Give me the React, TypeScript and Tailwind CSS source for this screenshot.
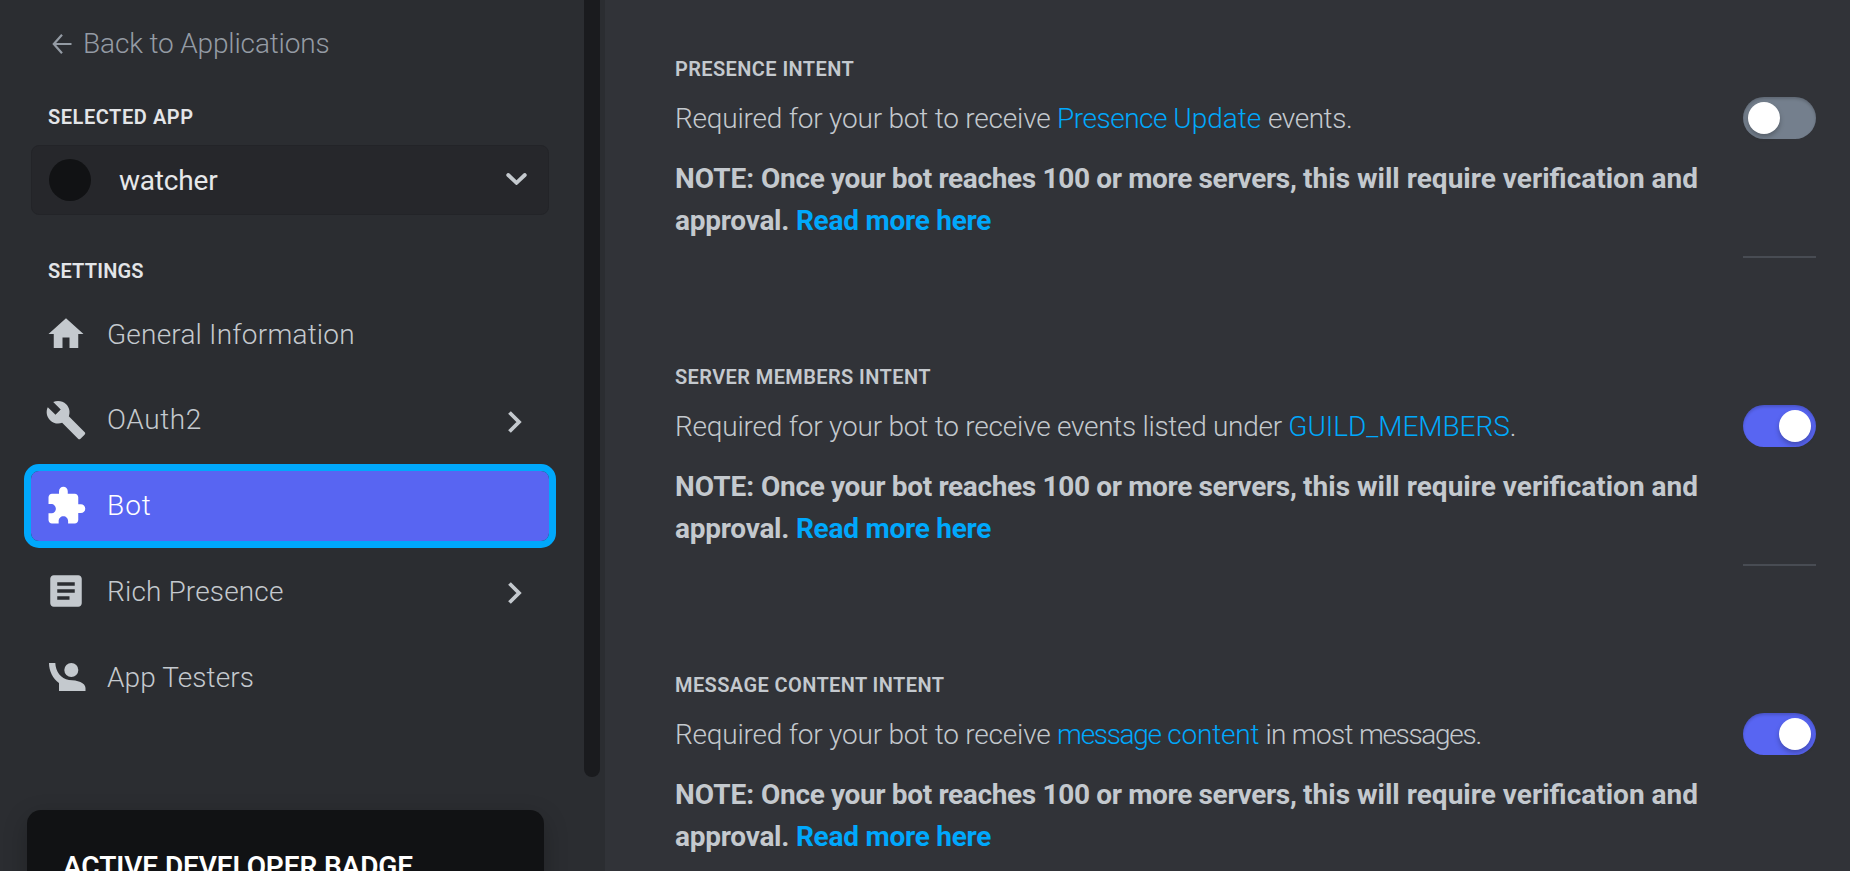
import type { ReactNode } from "react";
import { MdArticle, MdBuild, MdExtension, MdHome } from "react-icons/md";

function Toggle({ on }: { on?: boolean }) {
  return (
    <div className={"flex h-[42px] w-[73px] shrink-0 items-center rounded-full px-[5px] shadow-[inset_0_2px_3px_rgba(0,0,0,0.18)] " + (on ? "justify-end bg-[#5865f2]" : "justify-start bg-[#747f8d]")}>
      <div className="size-8 rounded-full bg-white shadow-[0_3px_5px_rgba(0,0,0,0.25)]" />
    </div>
  );
}

function Link({ children }: { children: ReactNode }) {
  return <a className="text-[#00a8fc]">{children}</a>;
}

function Intent({ title, on, children }: { title: string; on?: boolean; children: ReactNode }) {
  return (
    <section className="h-[308px]">
      <h3 className="mb-4 text-xl leading-6 font-semibold tracking-[0.4px]">{title}</h3>
      <div className="flex h-[159px] justify-between">
        <div className="w-[1036px] pt-px text-[28px] leading-[42px]">
          <p className="font-light tracking-[-0.21px]">Required for your bot to receive {children}</p>
          <p className="mt-[18px] font-bold">
            NOTE: <span className="tracking-[-0.35px]">Once your bot reaches 100 or more servers, </span>this will require verification and{" "}
            <span className="tracking-[-0.25px]">approval. <Link>Read more here</Link></span>
          </p>
        </div>
        <Toggle on={on} />
      </div>
      <div className="ml-auto h-0.5 w-[73px] bg-[#484c53]" />
    </section>
  );
}

function TestersIcon() {
  return (
    <svg className="size-full" viewBox="0 0 42 42" fill="currentColor">
      <path d="M4 6h6.3c.3 8 5.5 16.2 13.7 16.9 8.5.3 16.5 2.6 16.5 8.1v3H14v-8C8 21.8 4 14 4 6Z" />
      <circle cx="26.3" cy="13" r="7" />
    </svg>
  );
}

type NavItemProps = { icon: ReactNode; label: string; labelClass?: string; active?: boolean; arrowClass?: string };

function NavItem({ icon, label, labelClass = "", active, arrowClass }: NavItemProps) {
  return (
    <div className={"flex h-[70px] items-center rounded-lg pl-[14px] pr-[26px] text-[28px] font-light " + (active ? "bg-[#5865f2] text-white outline-[7px] outline-[#00a8fc]" : "text-[#c4c9ce]")}>
      <span className="flex size-[42px]">{icon}</span>
      <span className={"ml-5 " + labelClass}>{label}</span>
      {arrowClass && (
        <svg className={"ml-auto h-6 w-4 " + arrowClass} viewBox="0 0 16 24" fill="none" stroke="currentColor" strokeWidth="3.8">
          <path d="M2.5 2.5 12 12 2.5 21.5" />
        </svg>
      )}
    </div>
  );
}

export default function App() {
  return (
    <div className="flex h-[871px] w-[1850px] overflow-hidden bg-[#313338] font-[Roboto,'Liberation_Sans',sans-serif]">
      <aside className="flex w-[605px] shrink-0 justify-between bg-[#2b2d31] pr-[5px]">
        <div className="w-[556px] pl-[31px] pr-[7px]">
          <div className="mt-[23px] flex h-[42px] items-center pl-[21px] text-[28px] font-light text-[#949ba4]">
            <svg className="h-5 w-5" viewBox="0 0 20 20" fill="none" stroke="currentColor" strokeWidth="2.2">
              <path d="M10 .8 1.8 10l8.2 9.2M1.8 10H19.5" />
            </svg>
            <span className="ml-[11px] tracking-[-0.15px]">Back to Applications</span>
          </div>
          <h2 className="mt-10 pl-[17px] text-xl leading-6 font-semibold tracking-[0.55px] text-[#e3e5e8]">SELECTED APP</h2>
          <div className="mt-4 flex h-[70px] items-center rounded-lg border border-[#232428] bg-[#26272b] pl-[17px] pr-[21px] text-[28px] text-[#e6e8ea]">
            <span className="size-[42px] rounded-full bg-[#111214]" />
            <span className="ml-7 mt-0.5 tracking-[-0.2px]">watcher</span>
            <svg className="-mt-0.5 ml-auto h-3 w-[21px] text-[#c4c9ce]" viewBox="0 0 21 12" fill="none" stroke="currentColor" strokeWidth="3.8" strokeLinecap="round">
              <path d="m2.2 2 8.3 7.8L18.8 2" />
            </svg>
          </div>
          <h2 className="mt-11 mb-4 pl-[17px] text-xl leading-6 font-semibold tracking-[0.2px] text-[#e3e5e8]">SETTINGS</h2>
          <nav className="flex flex-col gap-4">
            <NavItem icon={<MdHome className="size-full" />} label="General Information" labelClass="mt-0.5 tracking-[0.2px]" />
            <NavItem icon={<MdBuild className="size-full" />} label="OAuth2" labelClass="tracking-[0.6px]" arrowClass="mt-[3px]" />
            <NavItem icon={<MdExtension className="size-full" />} label="Bot" labelClass="tracking-[1px]" active />
            <NavItem icon={<MdArticle className="-mt-px size-full" />} label="Rich Presence" labelClass="tracking-[0.15px]" arrowClass="mt-px" />
            <NavItem icon={<TestersIcon />} label="App Testers" labelClass="tracking-[0.1px]" />
          </nav>
          <div className="-ml-1 mt-[97px] h-[200px] w-[517px] rounded-t-[14px] bg-[#111214] pl-9 pt-9 text-[28px] font-semibold tracking-[-0.1px] text-white shadow-[0_8px_24px_rgba(0,0,0,0.24)]">
            ACTIVE DEVELOPER BADGE
          </div>
        </div>
        <div className="h-[777px] w-4 rounded-b-lg bg-[#1a1b1e]" />
      </aside>
      <main className="flex-1 pl-[70px] pr-[34px] pt-[57px] text-[#c4c9ce]">
        <Intent title="PRESENCE INTENT">
          <span className="tracking-[-0.5px]"><Link>Presence </Link></span><span className="tracking-normal"><Link>Update</Link></span> <span className="tracking-[-0.45px]">events.</span>
        </Intent>
        <Intent title="SERVER MEMBERS INTENT" on>
          <span className="tracking-[-0.3px]">events listed under </span><span className="tracking-[-0.05px]"><Link>GUILD_MEMBERS</Link>.</span>
        </Intent>
        <Intent title="MESSAGE CONTENT INTENT" on>
          <span className="tracking-[-1.3px]"><Link>message</Link></span><Link> content</Link><span className="tracking-[-0.7px]"> in most </span><span className="tracking-[-1.3px]">messages.</span>
        </Intent>
      </main>
    </div>
  );
}
